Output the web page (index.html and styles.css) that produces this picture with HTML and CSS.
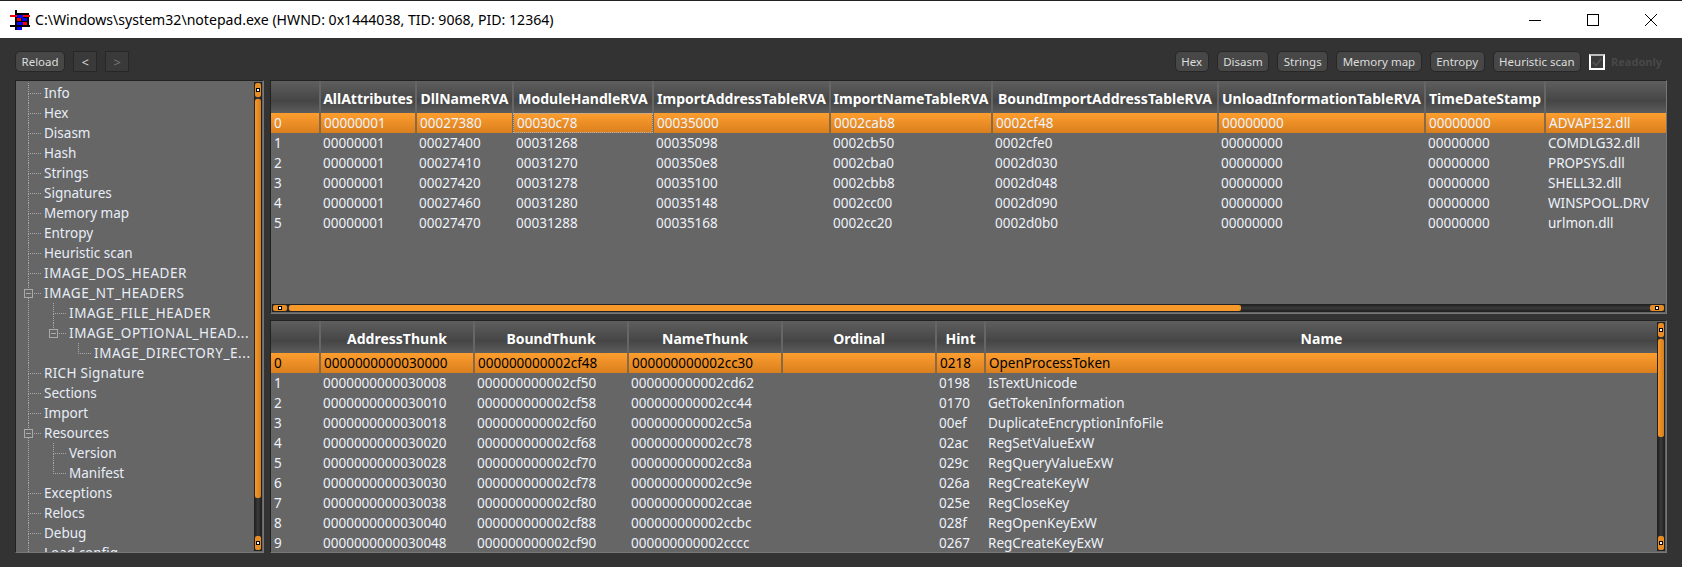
FILE: index.html
```html
<!DOCTYPE html>
<html lang="en">
<head>
  <meta charset="UTF-8" />
  <title>notepad.exe</title>
  <link rel="stylesheet" href="styles.css">
</head>
<body>
  <div class="window">
    <div class="titlebar">
      <svg class="appicon" width="20" height="20" viewBox="0 0 20 20">
        <rect x="5" y="0" width="2" height="20" fill="#000"/>
        <rect x="0" y="5" width="20" height="2" fill="#f00"/>
        <rect x="0" y="15" width="20" height="2" fill="#000"/>
        <rect x="7" y="3" width="12" height="13" fill="#000"/>
        <rect x="7" y="5" width="6" height="3" fill="#00f"/>
        <rect x="13" y="5" width="6" height="2" fill="#f00"/>
        <rect x="7" y="8" width="4" height="3" fill="#f00"/>
        <rect x="12" y="8" width="5" height="3" fill="#00f"/>
        <rect x="7" y="12" width="6" height="3" fill="#00f"/>
        <rect x="13" y="12" width="4" height="3" fill="#f00"/>
        <rect x="7" y="17" width="5" height="3" fill="#00f"/>
      </svg>
      <span class="title">C:\Windows\system32\notepad.exe (HWND: 0x1444038, TID: 9068, PID: 12364)</span>
      <div class="winbtns">
        <svg width="14" height="14" viewBox="0 0 14 14"><path d="M1 7.5H13" stroke="#000" fill="none"/></svg>
        <svg width="14" height="14" viewBox="0 0 14 14"><rect x="1.5" y="1.5" width="11" height="11" stroke="#000" fill="none"/></svg>
        <svg width="14" height="14" viewBox="0 0 14 14"><path d="M1 1L13 13M13 1L1 13" stroke="#000" fill="none"/></svg>
      </div>
    </div>

    <div class="content">
      <div class="toolbar">
        <button class="btn">Reload</button>
        <button class="btn square">&lt;</button>
        <button class="btn square off">&gt;</button>
        <div class="toolbar-right">
          <button class="btn">Hex</button>
          <button class="btn">Disasm</button>
          <button class="btn">Strings</button>
          <button class="btn">Memory map</button>
          <button class="btn">Entropy</button>
          <button class="btn">Heuristic scan</button>
          <span class="check"><svg width="12" height="12" viewBox="0 0 14 14"><path d="M2 7L6 11L12 3" stroke="#555" stroke-width="2" fill="none"/></svg></span>
          <span class="readonly">Readonly</span>
        </div>
      </div>

      <div class="main">
        <div class="panel tree-panel">
          <ul class="tree">
            <li><span>Info</span></li>
            <li><span>Hex</span></li>
            <li><span>Disasm</span></li>
            <li><span>Hash</span></li>
            <li><span>Strings</span></li>
            <li><span>Signatures</span></li>
            <li><span>Memory map</span></li>
            <li><span>Entropy</span></li>
            <li><span>Heuristic scan</span></li>
            <li><span class="caps">IMAGE_DOS_HEADER</span></li>
            <li><i class="box"></i><span class="caps">IMAGE_NT_HEADERS</span>
              <ul>
                <li><span class="caps">IMAGE_FILE_HEADER</span></li>
                <li><i class="box"></i><span class="caps">IMAGE_OPTIONAL_HEAD...</span>
                  <ul>
                    <li><span class="caps">IMAGE_DIRECTORY_E...</span></li>
                  </ul>
                </li>
              </ul>
            </li>
            <li><span class="rich">RICH Signature</span></li>
            <li><span>Sections</span></li>
            <li><span>Import</span></li>
            <li><i class="box"></i><span>Resources</span>
              <ul>
                <li><span>Version</span></li>
                <li><span>Manifest</span></li>
              </ul>
            </li>
            <li><span>Exceptions</span></li>
            <li><span>Relocs</span></li>
            <li><span>Debug</span></li>
            <li><span>Load config</span></li>
          </ul>
          <div class="vbar tree-bar">
            <div class="sbtn"><b></b></div>
            <div class="thumb"></div>
            <div class="sbtn end"><b></b></div>
          </div>
        </div>

        <div class="right">
          <div class="panel top-panel">
            <div class="table-wrap">
              <table>
                <colgroup>
                  <col style="width:49px"><col style="width:96px"><col style="width:97px"><col style="width:140px"><col style="width:177px"><col style="width:162px"><col style="width:226px"><col style="width:207px"><col style="width:120px"><col>
                </colgroup>
                <thead>
                  <tr><th></th><th>AllAttributes</th><th>DllNameRVA</th><th>ModuleHandleRVA</th><th>ImportAddressTableRVA</th><th>ImportNameTableRVA</th><th>BoundImportAddressTableRVA</th><th>UnloadInformationTableRVA</th><th>TimeDateStamp</th><th></th></tr>
                </thead>
                <tbody>
                  <tr class="sel"><td>0</td><td>00000001</td><td>00027380</td><td class="focus">00030c78</td><td>00035000</td><td>0002cab8</td><td>0002cf48</td><td>00000000</td><td>00000000</td><td>ADVAPI32.dll</td></tr>
                  <tr><td>1</td><td>00000001</td><td>00027400</td><td>00031268</td><td>00035098</td><td>0002cb50</td><td>0002cfe0</td><td>00000000</td><td>00000000</td><td>COMDLG32.dll</td></tr>
                  <tr><td>2</td><td>00000001</td><td>00027410</td><td>00031270</td><td>000350e8</td><td>0002cba0</td><td>0002d030</td><td>00000000</td><td>00000000</td><td>PROPSYS.dll</td></tr>
                  <tr><td>3</td><td>00000001</td><td>00027420</td><td>00031278</td><td>00035100</td><td>0002cbb8</td><td>0002d048</td><td>00000000</td><td>00000000</td><td>SHELL32.dll</td></tr>
                  <tr><td>4</td><td>00000001</td><td>00027460</td><td>00031280</td><td>00035148</td><td>0002cc00</td><td>0002d090</td><td>00000000</td><td>00000000</td><td>WINSPOOL.DRV</td></tr>
                  <tr><td>5</td><td>00000001</td><td>00027470</td><td>00031288</td><td>00035168</td><td>0002cc20</td><td>0002d0b0</td><td>00000000</td><td>00000000</td><td>urlmon.dll</td></tr>
                </tbody>
              </table>
            </div>
            <div class="hbar">
              <div class="sbtn"><b></b></div>
              <div class="thumb"></div>
              <div class="sbtn end"><b></b></div>
            </div>
          </div>

          <div class="panel bottom-panel">
            <div class="table-wrap">
              <table class="dark-sel">
                <colgroup>
                  <col style="width:49px"><col style="width:154px"><col style="width:154px"><col style="width:154px"><col style="width:154px"><col style="width:49px"><col>
                </colgroup>
                <thead>
                  <tr><th></th><th>AddressThunk</th><th>BoundThunk</th><th>NameThunk</th><th>Ordinal</th><th>Hint</th><th>Name</th></tr>
                </thead>
                <tbody>
                  <tr class="sel"><td>0</td><td>0000000000030000</td><td>000000000002cf48</td><td>000000000002cc30</td><td></td><td>0218</td><td>OpenProcessToken</td></tr>
                  <tr><td>1</td><td>0000000000030008</td><td>000000000002cf50</td><td>000000000002cd62</td><td></td><td>0198</td><td>IsTextUnicode</td></tr>
                  <tr><td>2</td><td>0000000000030010</td><td>000000000002cf58</td><td>000000000002cc44</td><td></td><td>0170</td><td>GetTokenInformation</td></tr>
                  <tr><td>3</td><td>0000000000030018</td><td>000000000002cf60</td><td>000000000002cc5a</td><td></td><td>00ef</td><td>DuplicateEncryptionInfoFile</td></tr>
                  <tr><td>4</td><td>0000000000030020</td><td>000000000002cf68</td><td>000000000002cc78</td><td></td><td>02ac</td><td>RegSetValueExW</td></tr>
                  <tr><td>5</td><td>0000000000030028</td><td>000000000002cf70</td><td>000000000002cc8a</td><td></td><td>029c</td><td>RegQueryValueExW</td></tr>
                  <tr><td>6</td><td>0000000000030030</td><td>000000000002cf78</td><td>000000000002cc9e</td><td></td><td>026a</td><td>RegCreateKeyW</td></tr>
                  <tr><td>7</td><td>0000000000030038</td><td>000000000002cf80</td><td>000000000002ccae</td><td></td><td>025e</td><td>RegCloseKey</td></tr>
                  <tr><td>8</td><td>0000000000030040</td><td>000000000002cf88</td><td>000000000002ccbc</td><td></td><td>028f</td><td>RegOpenKeyExW</td></tr>
                  <tr><td>9</td><td>0000000000030048</td><td>000000000002cf90</td><td>000000000002cccc</td><td></td><td>0267</td><td>RegCreateKeyExW</td></tr>
                </tbody>
              </table>
            </div>
            <div class="vbar table-bar">
              <div class="sbtn"><b></b></div>
              <div class="thumb"></div>
              <div class="sbtn end"><b></b></div>
            </div>
          </div>
        </div>
      </div>
    </div>
  </div>
</body>
</html>
```

FILE: styles.css
```css
html, body {
  margin: 0;
  height: 100%;
}
body {
  font-family: "Noto Sans", "Open Sans", sans-serif;
  font-size: 13.5px;
  color: #fff;
  background: #333;
  overflow: hidden;
}
.window {
  height: 567px;
  display: flex;
  flex-direction: column;
}

/* title bar */
.titlebar {
  height: 37px;
  flex: none;
  background: #fff;
  border-top: 1px solid #222;
  color: #000;
  display: flex;
  align-items: center;
  padding-left: 10px;
}
.appicon {
  margin-right: 5px;
}
.title {
  font-size: 14.1px;
}
.winbtns {
  margin-left: auto;
  display: flex;
  gap: 44px;
  padding-right: 24px;
}

/* toolbar */
.content {
  flex: 1;
  display: flex;
  flex-direction: column;
  padding: 13px 15px 14px 15px;
  min-height: 0;
}
.toolbar {
  height: 21px;
  display: flex;
  align-items: center;
  gap: 8px;
  flex: none;
}
.toolbar-right {
  margin-left: auto;
  display: flex;
  align-items: center;
  gap: 8px;
}
.btn {
  height: 21px;
  padding: 0 5.5px;
  font-family: inherit;
  font-size: 11.5px;
  color: #ddd;
  background: #474747;
  border: 1px solid #272727;
  border-radius: 5px;
}
.btn.square {
  width: 24px;
  padding: 0;
  background: #3a3a3a;
  border-radius: 0;
  font-size: 13px;
}
.btn.off {
  color: #777;
}
.check {
  width: 12px;
  height: 12px;
  border: 2px solid #fff;
  border-top-color: #bbb;
  background: #3a3a3a;
  display: flex;
  align-items: center;
  justify-content: center;
}
.readonly {
  color: #484848;
  font-size: 11px;
  font-weight: bold;
  margin-left: -2px;
  margin-right: 5px;
}

/* main split */
.main {
  flex: 1;
  display: flex;
  gap: 6px;
  margin-top: 8px;
  min-height: 0;
}
.panel {
  display: flex;
  background: #666;
  border: 1px solid #222;
  border-right-color: #777;
  border-bottom-color: #777;
  overflow: hidden;
}
.tree-panel {
  width: 247px;
  flex: none;
}
.right {
  flex: 1;
  display: flex;
  flex-direction: column;
  gap: 6px;
  min-width: 0;
}
.top-panel {
  height: 232px;
  flex: none;
  flex-direction: column;
}
.bottom-panel {
  flex: 1;
  min-height: 0;
}

/* tree */
.tree {
  flex: 1;
  list-style: none;
  margin: 2px 0 0 0;
  padding: 0 0 0 28px;
  overflow: hidden;
}
.tree ul {
  list-style: none;
  margin: 0;
  padding: 0 0 0 25px;
}
.tree li {
  position: relative;
}
.tree span {
  display: block;
  height: 20px;
  line-height: 20px;
  color: #e8eef8;
  white-space: nowrap;
}
.tree span.caps {
  letter-spacing: 0.55px;
}
.tree span.rich {
  letter-spacing: 0.3px;
}
.tree li::before {
  content: "";
  position: absolute;
  left: -16px;
  top: 0;
  width: 12px;
  height: 10px;
  border-left: 1px dotted #aaa;
  border-bottom: 1px dotted #aaa;
}
.tree li:not(:last-child)::after {
  content: "";
  position: absolute;
  left: -16px;
  top: 10px;
  bottom: 0;
  border-left: 1px dotted #aaa;
}
.box {
  position: absolute;
  left: -20px;
  top: 6px;
  width: 7px;
  height: 7px;
  border: 1px solid #aaa;
  background: linear-gradient(#aaa, #aaa) center / 5px 1px no-repeat #666;
  z-index: 1;
}

/* scrollbars */
.vbar, .hbar {
  display: flex;
  flex: none;
  background: linear-gradient(90deg, #222, #3c3c3c 50%, #222);
  border: 1px solid #222;
  box-sizing: border-box;
}
.vbar {
  flex-direction: column;
  width: 8px;
  margin: 1px 1px 1px 0;
}
.hbar {
  height: 8px;
  margin: 0 1px 1px 1px;
  background: linear-gradient(#222, #3c3c3c 50%, #222);
}
.sbtn {
  flex: none;
  width: 6px;
  height: 14px;
  background: #e88d24;
  border-radius: 2px;
  display: flex;
  align-items: center;
  justify-content: center;
}
.sbtn b {
  width: 2px;
  height: 2px;
  background: #fff;
  border: 1px solid #000;
}
.thumb {
  background: #f7982a;
  border-radius: 2px;
  margin-top: 2px;
}
.vbar .thumb {
  height: 399px;
  background: linear-gradient(90deg, #f7982a, #d47e1c);
}
.vbar .end {
  margin-top: auto;
}
.table-bar .thumb {
  height: 98px;
}
.hbar .sbtn {
  width: 14px;
  height: 6px;
}
.hbar .thumb {
  width: 952px;
  height: 6px;
  margin: 0 0 0 2px;
}
.hbar .end {
  margin: 0 0 0 auto;
}

/* tables */
.table-wrap {
  flex: 1;
  min-width: 0;
  min-height: 0;
  overflow: hidden;
}
table {
  border-collapse: collapse;
  table-layout: fixed;
  width: 100%;
}
th {
  height: 32px;
  padding: 3px 0 0 0;
  font-size: 14px;
  font-weight: bold;
  text-align: center;
  color: #fff;
  background: linear-gradient(#5f5f5f, #454545 62%, #5d5d5d);
  border-right: 2px solid #666;
  white-space: nowrap;
  box-sizing: border-box;
}
th:last-child {
  border-right: none;
}
td {
  height: 20px;
  padding: 0 0 0 3px;
  color: #eef3fb;
  white-space: nowrap;
  overflow: hidden;
  box-sizing: border-box;
}
.sel td {
  background: linear-gradient(#fd9e2e, #da7f1e);
  border-right: 2px solid #8a6a44;
}
.sel td:last-child {
  border-right: none;
}
.dark-sel .sel td {
  color: #000;
}
.sel td.focus {
  outline: 1px dotted #9cb4d0;
  outline-offset: -1px;
}
```
